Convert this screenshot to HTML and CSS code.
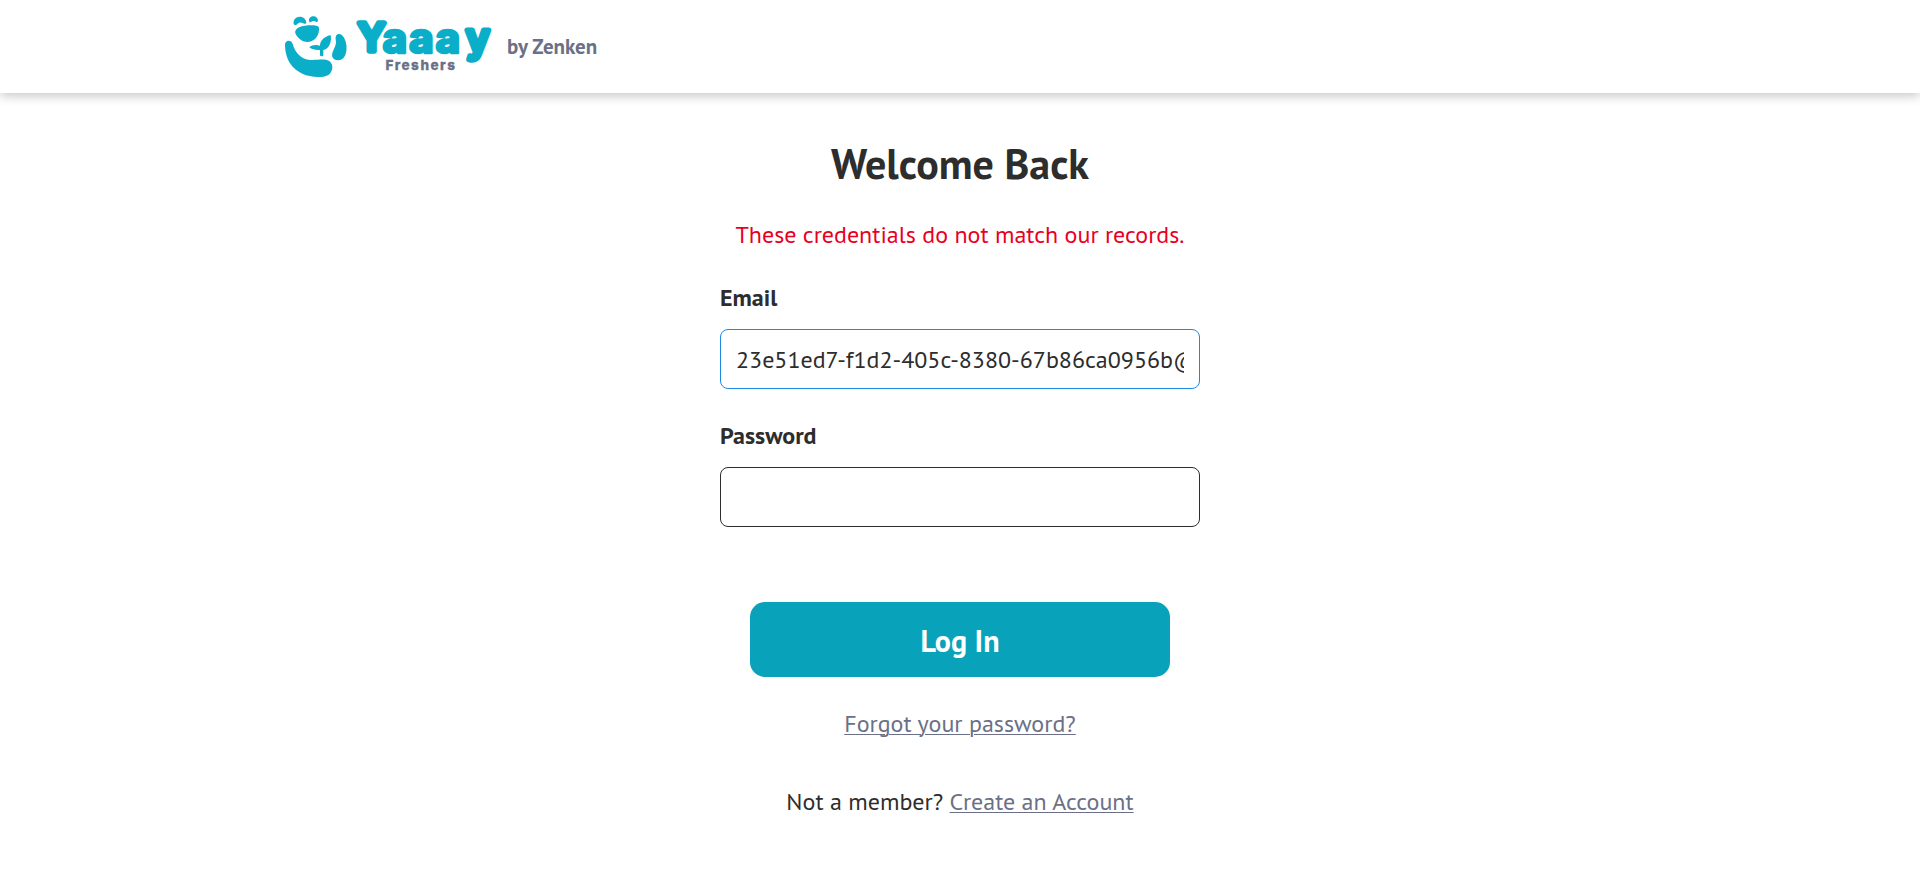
FILE: index.html
```html
<!DOCTYPE html>
<html lang="en">
<head>
<meta charset="utf-8">
<title>Log In | Yaaay Freshers</title>
<link rel="stylesheet" href="styles.css">
</head>
<body>
<header class="header">
  <a class="brand">
    <svg class="logo" viewBox="276 0 224 92" width="224" height="92" role="img">
      <g class="logo-mark" transform="translate(276 4) scale(.3333)">
        <path d="M53 60C51 47 60 38 71 38C82 38 91 46 91 56C89 61 84 60 80 57C75 54 69 55 65 59C61 64 55 65 53 60Z"/>
        <path d="M99 50C98 42 105 37 112 37C120 37 126 43 126 51C124 55 121 54 117 52C112 50 109 51 105 54C102 56 100 55 99 50Z"/>
        <path d="M58 88C56 81 60 74 69 70C85 64 104 63 121 65C128 66 130 69 129 78C128 99 113 114 94 114C78 114 64 102 58 88Z"/>
        <path d="M27 122C27 108 46 106 50 120C58 147 75 166 103 168C122 169 137 165 152 168C164 171 170 180 169 192C167 207 158 216 142 218C103 222 65 212 42 178C31 160 27 138 27 122Z"/>
        <path d="M180 96C184 88 193 88 200 96C209 106 214 124 211 142C208 160 199 169 186 169C173 168 166 160 169 147C172 136 179 128 180 116C180 108 177 102 180 96Z"/>
        <path d="M163 93C166 97 166 108 162 119C159 129 152 135 142 138L142 152C142 158 132 158 132 152L132 138C119 139 107 136 100 130C107 124 118 121 132 125C132 110 145 98 163 93Z"/>
      </g>
      <text class="logo-word"><tspan class="logo-cap" x="358" y="51.3">Y</tspan><tspan class="logo-a" x="382.5 409 435.5" y="52.6">aaa</tspan><tspan class="logo-tail" x="466" y="52">y</tspan></text>
      <text class="logo-sub" x="385.5" y="70.3" textLength="69.5" lengthAdjust="spacing">Freshers</text>
    </svg>
    <span class="byline">by Zenken</span>
  </a>
</header>
<main class="login">
  <h1 class="title">Welcome Back</h1>
  <p class="error">These credentials do not match our records.</p>
  <form class="form">
    <label class="label" for="email">Email</label>
    <input class="input input-active" id="email" type="text" value="23e51ed7-f1d2-405c-8380-67b86ca0956b@example.com">
    <label class="label" for="password">Password</label>
    <input class="input" id="password" type="password">
    <button class="submit" type="button">Log In</button>
  </form>
  <p class="forgot"><a class="link" href="#">Forgot your password?</a></p>
  <p class="signup">Not a member? <a class="link" href="#">Create an Account</a></p>
</main>
</body>
</html>
```
FILE: styles.css
```css
* { box-sizing: border-box; }
body {
  margin: 0;
  background: #fff;
  color: #2d2d2d;
  font: 24px/36px "PT Sans", Lato, sans-serif;
}
.header {
  height: 93px;
  background: #fff;
  box-shadow: 0 3px 10px rgba(0, 0, 0, .22);
  padding-left: 276px;
}
.brand { display: flex; height: 92px; align-items: center; gap: 7px; }
.logo { display: block; }
.logo-mark { fill: #0aaec8; }
.logo-word {
  font-family: Inter, sans-serif;
  fill: #0aaec8;
  stroke: #0aaec8;
  stroke-linejoin: round;
}
.logo-cap { font-size: 38px; font-weight: 600; stroke-width: 5.4px; }
.logo-a { font-size: 42px; font-weight: 800; stroke-width: 2.4px; }
.logo-tail { font-size: 40px; font-weight: 600; stroke-width: 5px; }
.logo-sub { font: 800 13.5px Inter, sans-serif; fill: #6b7086; stroke: #6b7086; stroke-width: .3px; }
.byline { padding-top: 1px; font-size: 21px; font-weight: 700; color: #6b7086; }
.login {
  width: 480px;
  margin: 0 auto;
  padding-top: 41px;
  text-align: center;
}
.title { margin: 0; font-size: 42px; line-height: 60px; }
.error { margin: 23px 0 27px; color: #e8001f; }
.form { display: flex; flex-direction: column; text-align: left; }
.label { font-weight: 700; }
.input {
  height: 60px;
  margin: 13px 0 29px;
  padding: 0 15px;
  border: 1px solid #2d2d2d;
  border-radius: 8px;
  outline: 0;
  background: #fff;
  color: inherit;
  font: inherit;
}
.input-active { border-color: #1e88e5; }
.submit {
  width: 420px;
  height: 75px;
  margin: 46px auto 29px;
  padding: 2px 0 0;
  border: 0;
  border-radius: 15px;
  background: #09a2bb;
  color: #fff;
  font: inherit;
  font-size: 30px;
  font-weight: 700;
}
.forgot { margin: 0 0 42px; }
.signup { margin: 0; }
.link { color: #6b7086; text-decoration-thickness: 1px; text-underline-offset: 2px; }
```
